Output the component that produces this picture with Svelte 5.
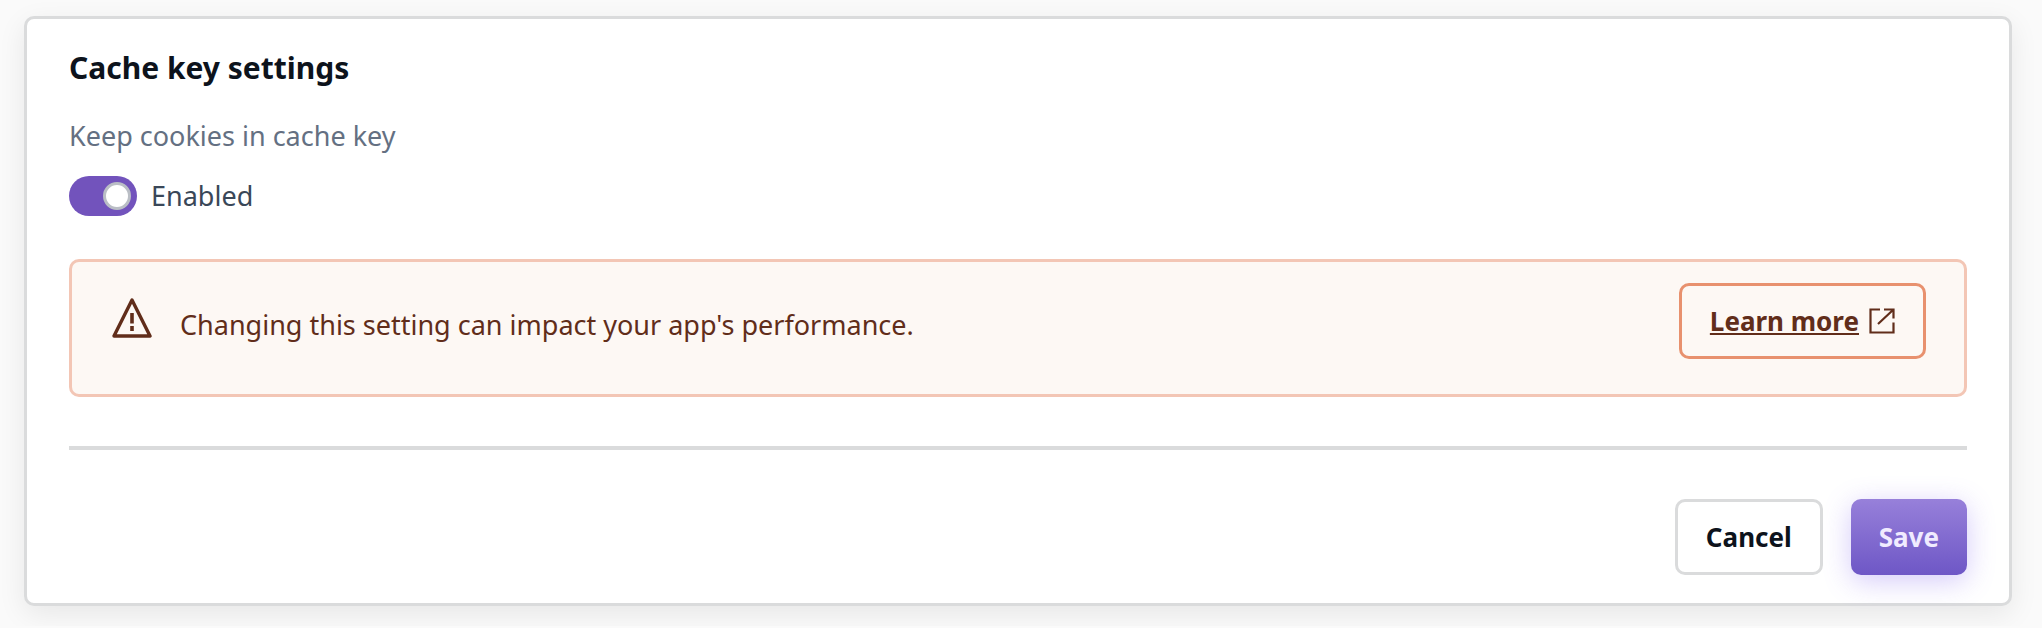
<script>
  let enabled = $state(true);
</script>

<form class="card" onsubmit={(e) => e.preventDefault()}>
  <h2>Cache key settings</h2>

  <p class="field-label" id="cookies-label">Keep cookies in cache key</p>
  <label class="toggle">
    <input
      type="checkbox"
      role="switch"
      bind:checked={enabled}
      aria-describedby="cookies-label"
    />
    <span>{enabled ? "Enabled" : "Disabled"}</span>
  </label>

  <div class="alert" role="alert">
    <svg class="alert-icon" viewBox="0 0 40 40" aria-hidden="true">
      <path
        d="M20 2 L38 38 H2 Z"
        fill="none"
        stroke="currentColor"
        stroke-width="3.4"
        stroke-linejoin="round"
      />
      <path d="M20 15 V25.5 M20 28 V33" fill="none" stroke="currentColor" stroke-width="3.6" />
    </svg>
    <p>Changing this setting can impact your app's performance.</p>
    <a class="btn learn" href="#learn-more">
      <span>Learn more</span>
      <svg class="link-icon" viewBox="0 0 26 26" aria-hidden="true">
        <path
          d="M11 1.5 H1.5 V24.5 H24.5 V14.5 M15 1.5 H24.5 V10.5 M24.5 1.5 L9 16"
          fill="none"
          stroke="currentColor"
          stroke-width="2.2"
        />
      </svg>
    </a>
  </div>

  <hr />

  <div class="actions">
    <button class="btn" type="button">Cancel</button>
    <button class="btn save" type="submit">Save</button>
  </div>
</form>

<style>
  :global(*),
  :global(*::before) {
    box-sizing: border-box;
    margin: 0;
    padding: 0;
  }

  :global(body) {
    background: #fafafa;
    color: #0d131c;
    font-family: "Noto Sans", "Open Sans", sans-serif;
    font-size: 27px;
    line-height: 40px;
  }

  .card {
    display: flex;
    flex-direction: column;
    margin: 16px 30px 20px 24px;
    padding: 29px 42px 28px;
    background: #fff;
    border: 3px solid #dadbdc;
    border-radius: 10px;
    box-shadow: 0 8px 28px rgba(0, 0, 0, 0.08);
  }

  h2 {
    font-size: 30px;
    font-weight: 700;
    line-height: 40px;
  }

  .field-label {
    margin-top: 28px;
    color: #647082;
  }

  .toggle {
    display: flex;
    align-items: center;
    align-self: flex-start;
    gap: 14px;
    margin-top: 20px;
    color: #3a4758;
    cursor: pointer;
  }

  .toggle input {
    appearance: none;
    display: flex;
    align-items: center;
    width: 68px;
    height: 40px;
    padding: 0 6px;
    border-radius: 20px;
    background: #b9bfc6;
    cursor: pointer;
  }

  .toggle input::before {
    content: "";
    width: 28px;
    height: 28px;
    border: 3px solid #babec5;
    border-radius: 50%;
    background: #fff;
  }

  .toggle input:checked {
    justify-content: flex-end;
    background: #7253bc;
  }

  .alert {
    display: flex;
    align-items: center;
    margin-top: 43px;
    padding: 21px 38px 35px 40px;
    color: #612d1a;
    background: #fdf8f4;
    border: 3px solid #f3c6b5;
    border-radius: 10px;
  }

  .alert-icon {
    flex: none;
    width: 40px;
    height: 46px;
    padding-bottom: 6px;
    margin-right: 28px;
  }

  .alert p {
    flex: 1;
    padding-top: 8px;
  }

  .btn {
    display: flex;
    align-items: center;
    justify-content: center;
    height: 76px;
    padding: 0 28px;
    font: inherit;
    font-size: 26px;
    font-weight: 700;
    color: #0d131c;
    background: #fff;
    border: 3px solid #dadbdc;
    border-radius: 10px;
    cursor: pointer;
  }

  .learn {
    gap: 10px;
    color: #612d1a;
    background: none;
    border-color: #e8916e;
    text-decoration: none;
  }

  .learn span {
    text-decoration: underline;
    text-decoration-thickness: 2px;
    text-underline-offset: 2px;
    text-decoration-skip-ink: none;
  }

  .link-icon {
    width: 26px;
    height: 26px;
  }

  hr {
    height: 4px;
    margin: 49px 0;
    border: none;
    background: #dadbdc;
  }

  .actions {
    display: flex;
    justify-content: flex-end;
    gap: 28px;
  }

  .save {
    border: none;
    color: #f0ebff;
    background: linear-gradient(#9780da, #6e57c6);
    box-shadow: 0 6px 28px rgba(120, 90, 240, 0.32);
  }
</style>
